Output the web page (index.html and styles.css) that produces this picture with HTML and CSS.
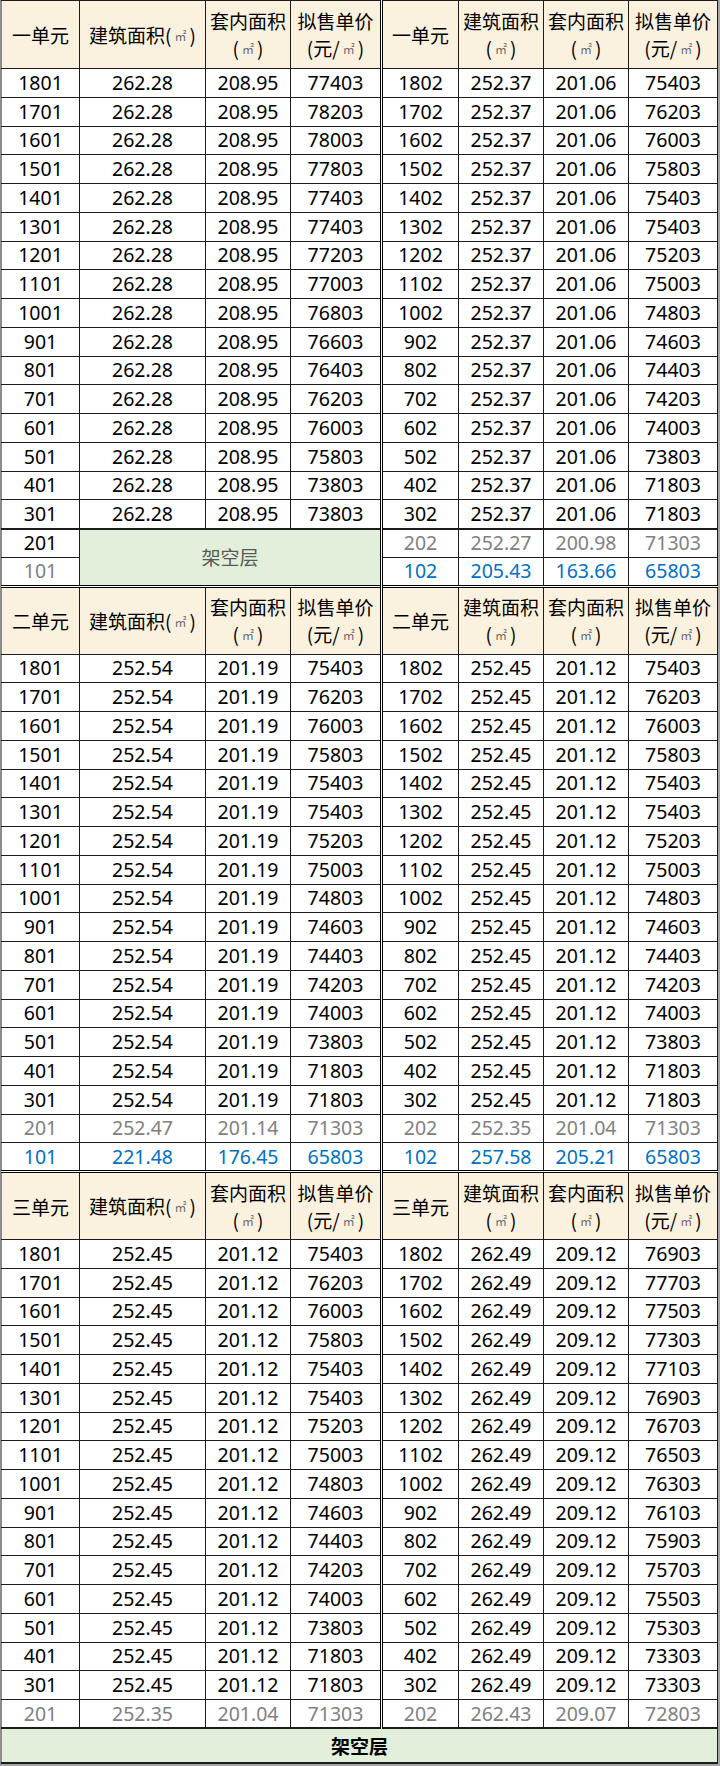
FILE: index.html
```html
<!DOCTYPE html>
<html lang="zh-CN">
<head>
<meta charset="utf-8">
<title>拟售单价表</title>
<link rel="stylesheet" href="styles.css">
</head>
<body>
<div class="sheet">
<table class="price">
<colgroup>
<col class="c1"><col class="c2"><col class="c3"><col class="c4">
<col class="c5"><col class="c6"><col class="c7"><col class="c8">
</colgroup>
<tbody>
<tr class="hd">
<th>一单元</th><th>建筑面积(<span class="u">㎡</span>)</th><th>套内面积<br>(<span class="u">㎡</span>)</th><th>拟售单价<br>(元/<span class="u">㎡</span>)</th>
<th class="m">一单元</th><th>建筑面积<br>(<span class="u">㎡</span>)</th><th>套内面积<br>(<span class="u">㎡</span>)</th><th>拟售单价<br>(元/<span class="u">㎡</span>)</th>
</tr>
<tr><td>1801</td><td>262.28</td><td>208.95</td><td>77403</td><td class="m">1802</td><td>252.37</td><td>201.06</td><td>75403</td></tr>
<tr><td>1701</td><td>262.28</td><td>208.95</td><td>78203</td><td class="m">1702</td><td>252.37</td><td>201.06</td><td>76203</td></tr>
<tr><td>1601</td><td>262.28</td><td>208.95</td><td>78003</td><td class="m">1602</td><td>252.37</td><td>201.06</td><td>76003</td></tr>
<tr><td>1501</td><td>262.28</td><td>208.95</td><td>77803</td><td class="m">1502</td><td>252.37</td><td>201.06</td><td>75803</td></tr>
<tr><td>1401</td><td>262.28</td><td>208.95</td><td>77403</td><td class="m">1402</td><td>252.37</td><td>201.06</td><td>75403</td></tr>
<tr><td>1301</td><td>262.28</td><td>208.95</td><td>77403</td><td class="m">1302</td><td>252.37</td><td>201.06</td><td>75403</td></tr>
<tr><td>1201</td><td>262.28</td><td>208.95</td><td>77203</td><td class="m">1202</td><td>252.37</td><td>201.06</td><td>75203</td></tr>
<tr><td>1101</td><td>262.28</td><td>208.95</td><td>77003</td><td class="m">1102</td><td>252.37</td><td>201.06</td><td>75003</td></tr>
<tr><td>1001</td><td>262.28</td><td>208.95</td><td>76803</td><td class="m">1002</td><td>252.37</td><td>201.06</td><td>74803</td></tr>
<tr><td>901</td><td>262.28</td><td>208.95</td><td>76603</td><td class="m">902</td><td>252.37</td><td>201.06</td><td>74603</td></tr>
<tr><td>801</td><td>262.28</td><td>208.95</td><td>76403</td><td class="m">802</td><td>252.37</td><td>201.06</td><td>74403</td></tr>
<tr><td>701</td><td>262.28</td><td>208.95</td><td>76203</td><td class="m">702</td><td>252.37</td><td>201.06</td><td>74203</td></tr>
<tr><td>601</td><td>262.28</td><td>208.95</td><td>76003</td><td class="m">602</td><td>252.37</td><td>201.06</td><td>74003</td></tr>
<tr><td>501</td><td>262.28</td><td>208.95</td><td>75803</td><td class="m">502</td><td>252.37</td><td>201.06</td><td>73803</td></tr>
<tr><td>401</td><td>262.28</td><td>208.95</td><td>73803</td><td class="m">402</td><td>252.37</td><td>201.06</td><td>71803</td></tr>
<tr><td>301</td><td>262.28</td><td>208.95</td><td>73803</td><td class="m">302</td><td>252.37</td><td>201.06</td><td>71803</td></tr>
<tr class="thick"><td>201</td><td class="void" colspan="3" rowspan="2">架空层</td><td class="m gray">202</td><td class="gray">252.27</td><td class="gray">200.98</td><td class="gray">71303</td></tr>
<tr><td class="gray">101</td><td class="m blue">102</td><td class="blue">205.43</td><td class="blue">163.66</td><td class="blue">65803</td></tr>

<tr class="hd top">
<th>二单元</th><th>建筑面积(<span class="u">㎡</span>)</th><th>套内面积<br>(<span class="u">㎡</span>)</th><th>拟售单价<br>(元/<span class="u">㎡</span>)</th>
<th class="m">二单元</th><th>建筑面积<br>(<span class="u">㎡</span>)</th><th>套内面积<br>(<span class="u">㎡</span>)</th><th>拟售单价<br>(元/<span class="u">㎡</span>)</th>
</tr>
<tr><td>1801</td><td>252.54</td><td>201.19</td><td>75403</td><td class="m">1802</td><td>252.45</td><td>201.12</td><td>75403</td></tr>
<tr><td>1701</td><td>252.54</td><td>201.19</td><td>76203</td><td class="m">1702</td><td>252.45</td><td>201.12</td><td>76203</td></tr>
<tr><td>1601</td><td>252.54</td><td>201.19</td><td>76003</td><td class="m">1602</td><td>252.45</td><td>201.12</td><td>76003</td></tr>
<tr><td>1501</td><td>252.54</td><td>201.19</td><td>75803</td><td class="m">1502</td><td>252.45</td><td>201.12</td><td>75803</td></tr>
<tr><td>1401</td><td>252.54</td><td>201.19</td><td>75403</td><td class="m">1402</td><td>252.45</td><td>201.12</td><td>75403</td></tr>
<tr><td>1301</td><td>252.54</td><td>201.19</td><td>75403</td><td class="m">1302</td><td>252.45</td><td>201.12</td><td>75403</td></tr>
<tr><td>1201</td><td>252.54</td><td>201.19</td><td>75203</td><td class="m">1202</td><td>252.45</td><td>201.12</td><td>75203</td></tr>
<tr><td>1101</td><td>252.54</td><td>201.19</td><td>75003</td><td class="m">1102</td><td>252.45</td><td>201.12</td><td>75003</td></tr>
<tr><td>1001</td><td>252.54</td><td>201.19</td><td>74803</td><td class="m">1002</td><td>252.45</td><td>201.12</td><td>74803</td></tr>
<tr><td>901</td><td>252.54</td><td>201.19</td><td>74603</td><td class="m">902</td><td>252.45</td><td>201.12</td><td>74603</td></tr>
<tr><td>801</td><td>252.54</td><td>201.19</td><td>74403</td><td class="m">802</td><td>252.45</td><td>201.12</td><td>74403</td></tr>
<tr><td>701</td><td>252.54</td><td>201.19</td><td>74203</td><td class="m">702</td><td>252.45</td><td>201.12</td><td>74203</td></tr>
<tr><td>601</td><td>252.54</td><td>201.19</td><td>74003</td><td class="m">602</td><td>252.45</td><td>201.12</td><td>74003</td></tr>
<tr><td>501</td><td>252.54</td><td>201.19</td><td>73803</td><td class="m">502</td><td>252.45</td><td>201.12</td><td>73803</td></tr>
<tr><td>401</td><td>252.54</td><td>201.19</td><td>71803</td><td class="m">402</td><td>252.45</td><td>201.12</td><td>71803</td></tr>
<tr><td>301</td><td>252.54</td><td>201.19</td><td>71803</td><td class="m">302</td><td>252.45</td><td>201.12</td><td>71803</td></tr>
<tr><td class="gray">201</td><td class="gray">252.47</td><td class="gray">201.14</td><td class="gray">71303</td><td class="m gray">202</td><td class="gray">252.35</td><td class="gray">201.04</td><td class="gray">71303</td></tr>
<tr><td class="blue">101</td><td class="blue">221.48</td><td class="blue">176.45</td><td class="blue">65803</td><td class="m blue">102</td><td class="blue">257.58</td><td class="blue">205.21</td><td class="blue">65803</td></tr>

<tr class="hd top">
<th>三单元</th><th>建筑面积(<span class="u">㎡</span>)</th><th>套内面积<br>(<span class="u">㎡</span>)</th><th>拟售单价<br>(元/<span class="u">㎡</span>)</th>
<th class="m">三单元</th><th>建筑面积<br>(<span class="u">㎡</span>)</th><th>套内面积<br>(<span class="u">㎡</span>)</th><th>拟售单价<br>(元/<span class="u">㎡</span>)</th>
</tr>
<tr><td>1801</td><td>252.45</td><td>201.12</td><td>75403</td><td class="m">1802</td><td>262.49</td><td>209.12</td><td>76903</td></tr>
<tr><td>1701</td><td>252.45</td><td>201.12</td><td>76203</td><td class="m">1702</td><td>262.49</td><td>209.12</td><td>77703</td></tr>
<tr><td>1601</td><td>252.45</td><td>201.12</td><td>76003</td><td class="m">1602</td><td>262.49</td><td>209.12</td><td>77503</td></tr>
<tr><td>1501</td><td>252.45</td><td>201.12</td><td>75803</td><td class="m">1502</td><td>262.49</td><td>209.12</td><td>77303</td></tr>
<tr><td>1401</td><td>252.45</td><td>201.12</td><td>75403</td><td class="m">1402</td><td>262.49</td><td>209.12</td><td>77103</td></tr>
<tr><td>1301</td><td>252.45</td><td>201.12</td><td>75403</td><td class="m">1302</td><td>262.49</td><td>209.12</td><td>76903</td></tr>
<tr><td>1201</td><td>252.45</td><td>201.12</td><td>75203</td><td class="m">1202</td><td>262.49</td><td>209.12</td><td>76703</td></tr>
<tr><td>1101</td><td>252.45</td><td>201.12</td><td>75003</td><td class="m">1102</td><td>262.49</td><td>209.12</td><td>76503</td></tr>
<tr><td>1001</td><td>252.45</td><td>201.12</td><td>74803</td><td class="m">1002</td><td>262.49</td><td>209.12</td><td>76303</td></tr>
<tr><td>901</td><td>252.45</td><td>201.12</td><td>74603</td><td class="m">902</td><td>262.49</td><td>209.12</td><td>76103</td></tr>
<tr><td>801</td><td>252.45</td><td>201.12</td><td>74403</td><td class="m">802</td><td>262.49</td><td>209.12</td><td>75903</td></tr>
<tr><td>701</td><td>252.45</td><td>201.12</td><td>74203</td><td class="m">702</td><td>262.49</td><td>209.12</td><td>75703</td></tr>
<tr><td>601</td><td>252.45</td><td>201.12</td><td>74003</td><td class="m">602</td><td>262.49</td><td>209.12</td><td>75503</td></tr>
<tr><td>501</td><td>252.45</td><td>201.12</td><td>73803</td><td class="m">502</td><td>262.49</td><td>209.12</td><td>75303</td></tr>
<tr><td>401</td><td>252.45</td><td>201.12</td><td>71803</td><td class="m">402</td><td>262.49</td><td>209.12</td><td>73303</td></tr>
<tr><td>301</td><td>252.45</td><td>201.12</td><td>71803</td><td class="m">302</td><td>262.49</td><td>209.12</td><td>73303</td></tr>
<tr><td class="gray">201</td><td class="gray">252.35</td><td class="gray">201.04</td><td class="gray">71303</td><td class="m gray">202</td><td class="gray">262.43</td><td class="gray">209.07</td><td class="gray">72803</td></tr>
<tr class="foot"><td colspan="8">架空层</td></tr>
</tbody>
</table>
</div>
</body>
</html>
```

FILE: styles.css
```css
html, body {
  margin: 0;
  padding: 0;
  background: #ffffff;
}

.sheet {
  width: 720px;
  height: 1766px;
  box-sizing: border-box;
  border-left: 1px solid #8c8c8c;
  border-right: 2px solid #a6a6a6;
  border-bottom: 2px solid #a6a6a6;
  overflow: hidden;
}

.price {
  width: 717px;
  table-layout: fixed;
  border-collapse: collapse;
  font-family: "Noto Sans", "Noto Sans CJK SC", sans-serif;
  font-size: 19.5px;
  color: #000000;
}

.c1 { width: 78px; }
.c2 { width: 126px; }
.c3 { width: 85px; }
.c4 { width: 91px; }
.c5 { width: 77px; }
.c6 { width: 85px; }
.c7 { width: 85px; }
.c8 { width: 89px; }

.price th,
.price td {
  border: 1px solid #1c1c1c;
  padding: 0;
  text-align: center;
  vertical-align: middle;
  white-space: nowrap;
  font-weight: normal;
  line-height: 26px;
  overflow: hidden;
}

.price tr {
  height: 28.75px;
}

.price th:first-child,
.price td:first-child {
  border-left: 1px solid #8c8c8c;
}

.price tr.hd {
  height: 68px;
}

.price tr.hd th {
  background: #fbf1df;
  font-family: "Noto Sans CJK SC", "Noto Sans", sans-serif;
  font-size: 19px;
  line-height: 27px;
}

.price tr.top th {
  border-top: 3px double #000000;
}

.price tr.thick td {
  border-top: 2px solid #1c1c1c;
}

.price .m {
  border-left: 3px double #000000;
}

.u {
  display: inline-block;
  font-size: 12px;
  color: #6b6b6b;
  margin: 0 3px;
  vertical-align: 2px;
}

.gray {
  color: #808080;
}

.blue {
  color: #0070c0;
}

.price td.void {
  background: #e2efda;
  color: #595959;
  font-family: "Noto Sans CJK SC", "Noto Sans", sans-serif;
  font-size: 19px;
}

.price tr.foot {
  height: 35px;
}

.price tr.foot td {
  background: #e2efda;
  border-top: 2px solid #1c1c1c;
  border-bottom: 2px solid #1c1c1c;
  font-family: "Noto Sans CJK SC", "Noto Sans", sans-serif;
  font-weight: bold;
  font-size: 19px;
}
```
